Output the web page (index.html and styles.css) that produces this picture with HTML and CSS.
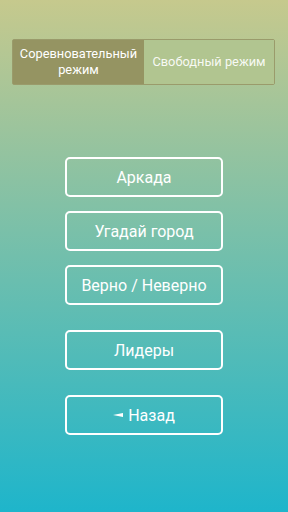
FILE: index.html
```html
<!DOCTYPE html>
<html lang="ru">
<head>
    <meta charset="UTF-8">
    <meta name="viewport" content="width=device-width, initial-scale=1.0">
    <title>Режимы игры</title>
    <link rel="stylesheet" href="styles.css">
</head>
<body>

<div class="screen">
    <!-- Mode switch -->
    <div class="tabs">
        <div class="tab active">Соревновательный режим</div>
        <div class="tab">Свободный режим</div>
    </div>

    <!-- Menu buttons -->
    <div class="menu">
        <button class="menu-btn">Аркада</button>
        <button class="menu-btn">Угадай город</button>
        <button class="menu-btn">Верно / Неверно</button>
        <button class="menu-btn leaders">Лидеры</button>
        <button class="menu-btn back"><span class="arrow"></span>Назад</button>
    </div>
</div>

</body>
</html>
```

FILE: styles.css
```css
body {
    margin: 0;
    padding: 0;
    font-family: Roboto, "Liberation Sans", sans-serif;
}

.screen {
    width: 288px;
    height: 512px;
    padding-top: 39px;
    box-sizing: border-box;
    background: linear-gradient(to bottom, #c6c98d 0%, #72bfac 50%, #1eb5cb 100%);
    overflow: hidden;
}

.tabs {
    display: flex;
    margin: 0 13px 0 12px;
    height: 46px;
    border: 1px solid #9a9b6b;
    border-radius: 2px;
    box-sizing: border-box;
}

.tab {
    display: flex;
    align-items: center;
    justify-content: center;
    text-align: center;
    font-size: 12.8px;
    line-height: 16px;
    color: rgba(255, 255, 255, 0.92);
    background-color: #b1c590;
}

.tab:first-child {
    width: 131px;
    padding: 0 3px;
    box-sizing: border-box;
}

.tab:last-child {
    flex: 1;
}

.tab.active {
    background-color: #959462;
    color: #fff;
}

.menu {
    display: flex;
    flex-direction: column;
    align-items: center;
    margin-top: 72px;
}

.menu-btn {
    display: flex;
    align-items: center;
    justify-content: center;
    width: 158px;
    height: 40px;
    margin-bottom: 14px;
    border: 2px solid #fff;
    border-radius: 5px;
    background: transparent;
    color: #fff;
    font-family: Roboto, "Liberation Sans", sans-serif;
    font-size: 16px;
    padding: 0;
}

.menu-btn.leaders {
    margin-top: 11px;
    margin-bottom: 0;
}

.menu-btn.back {
    margin-top: 25px;
    margin-bottom: 0;
}

/* small left-pointing triangle */
.arrow {
    width: 0;
    height: 0;
    border-top: 2.5px solid transparent;
    border-bottom: 2.5px solid transparent;
    border-right: 10px solid #fff;
    margin-right: 5px;
}
```
